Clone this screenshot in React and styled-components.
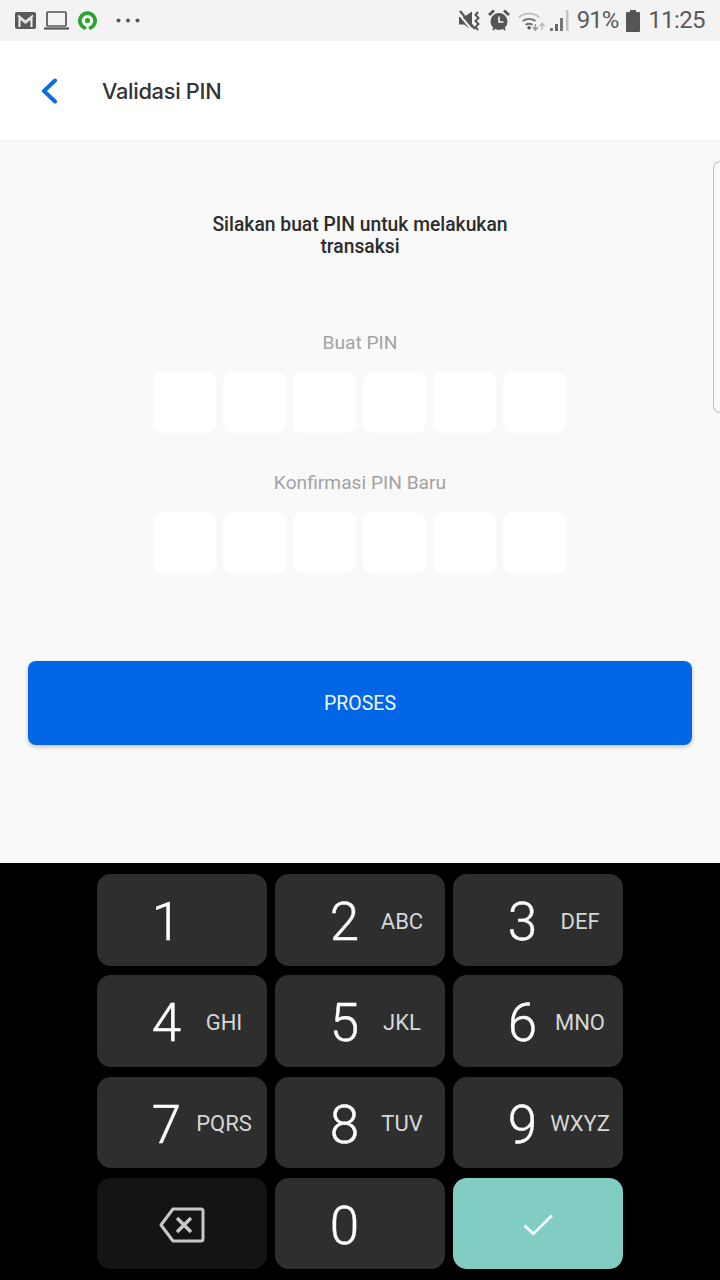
import React from "react";
import styled, { createGlobalStyle } from "styled-components";

const GlobalStyle = createGlobalStyle`
  html, body {
    margin: 0;
    padding: 0;
    background: #000;
  }
  * {
    box-sizing: border-box;
  }
`;

const Screen = styled.div`
  position: relative;
  width: 720px;
  height: 1280px;
  overflow: hidden;
  display: flex;
  flex-direction: column;
  font-family: Roboto, "Liberation Sans", sans-serif;
`;

const StatusBar = styled.div`
  height: 41px;
  background: #f3f3f3;
  display: flex;
  align-items: center;
  justify-content: space-between;
  padding: 0 15px;
  color: #555;
`;

const StatusGroup = styled.div`
  display: flex;
  align-items: center;
`;

const Slot = styled.span`
  display: flex;
  margin-left: ${(p) => p.$left || 0}px;
`;

const StatusText = styled.span`
  font-size: 24px;
  line-height: 41px;
  color: #5a5a5a;
  letter-spacing: ${(p) => p.$spacing}px;
  margin-left: ${(p) => p.$left || 0}px;
`;

const Header = styled.header`
  height: 100px;
  background: #fff;
  border-bottom: 1px solid #f1f1f1;
  display: flex;
  align-items: center;
  padding-left: 40px;
`;

const BackButton = styled.button`
  width: 62px;
  height: 32px;
  padding: 0;
  border: 0;
  background: none;
  display: flex;
  align-items: center;
`;

const Title = styled.h1`
  margin: 0;
  font-family: Inter, sans-serif;
  font-size: 21.8px;
  font-weight: 500;
  letter-spacing: -0.3px;
  color: #333;
`;

const Content = styled.main`
  flex: 1;
  background: #f9f9f9;
  display: flex;
  flex-direction: column;
  align-items: center;
  padding: 73px 28px 0;
`;

const Heading = styled.p`
  margin: 0 0 73px;
  width: 330px;
  font-size: 19.3px;
  line-height: 22px;
  font-weight: 500;
  text-align: center;
  color: #2c2c2c;
`;

const FieldLabel = styled.label`
  font-size: 19.2px;
  line-height: 24px;
  color: #a3a3a3;
  margin-bottom: 17px;
`;

const PinRow = styled.div`
  display: flex;
  gap: 7px;
  padding-right: 1px;
  margin-bottom: ${(p) => p.$bottom}px;
`;

const PinBox = styled.div`
  width: 63px;
  height: 61px;
  border-radius: 9px;
  background: #fff;
`;

const SubmitButton = styled.button`
  width: 100%;
  height: 84px;
  border: 0;
  border-radius: 8px;
  background: #0066e6;
  color: #f2f7ff;
  font-family: inherit;
  font-size: 19.5px;
  box-shadow: 0 2px 4px rgba(0, 0, 0, 0.22);
`;

const EdgeHandle = styled.div`
  position: absolute;
  top: 161px;
  right: 0;
  width: 7px;
  height: 252px;
  border: 1px solid #bdbdbd;
  border-right: 0;
  border-radius: 8px 0 0 8px;
`;

const Keypad = styled.section`
  height: 417px;
  background: #000;
  display: grid;
  grid-template-columns: repeat(3, 170px);
  grid-auto-rows: 91.5px;
  column-gap: 8px;
  row-gap: 9.8px;
  justify-content: start;
  padding: 11px 0 0 97px;
`;

const Key = styled.button`
  border: 0;
  padding: 0 0 0 44px;
  border-radius: 14px;
  background: ${(p) => p.$bg || "#2e2e2e"};
  display: grid;
  grid-template-columns: 51px 64px;
  align-items: center;
  justify-items: center;
  font-family: inherit;
`;

const IconKey = styled(Key)`
  padding: 2px 0 0;
  display: flex;
  justify-content: center;
`;

const Digit = styled.span`
  font-size: 53px;
  line-height: 91px;
  font-weight: 300;
  color: #fff;
  padding-top: 3px;
  -webkit-text-stroke: 0.4px #fff;
`;

const Letters = styled.span`
  font-size: 22px;
  color: #d6d6d6;
  white-space: nowrap;
`;

const keys = [
  ["1", ""],
  ["2", "ABC"],
  ["3", "DEF"],
  ["4", "GHI"],
  ["5", "JKL"],
  ["6", "MNO"],
  ["7", "PQRS"],
  ["8", "TUV"],
  ["9", "WXYZ"],
];

const GmailIcon = () => (
  <svg width="21" height="17" viewBox="0 0 21 17">
    <rect width="21" height="17" rx="2" fill="#595959" />
    <path d="M3.5 15V5l7 5.5 7-5.5v10" fill="#f3f3f3" />
    <path d="M3 3.5l7.5 5.8L18 3.5" fill="none" stroke="#f3f3f3" strokeWidth="1.6" />
    <path d="M5.5 16V8l5 4 5-4v8z" fill="#595959" />
  </svg>
);

const LaptopIcon = () => (
  <svg width="25" height="19" viewBox="0 0 25 19">
    <rect x="3" y="1" width="19" height="14" rx="1" fill="none" stroke="#555" strokeWidth="1.7" />
    <path d="M0 17.5h25" stroke="#555" strokeWidth="2.2" />
  </svg>
);

const RingIcon = () => (
  <svg width="19" height="19" viewBox="0 0 20 20">
    <path
      d="M6.8 17.6a8 8 0 1 1 6.4 0"
      fill="none"
      stroke="#2ba52e"
      strokeWidth="4"
      strokeLinecap="round"
    />
    <circle cx="10" cy="10" r="2.7" fill="#2ba52e" />
  </svg>
);

const DotsIcon = () => (
  <svg width="24" height="5" viewBox="0 0 24 5">
    <circle cx="2.5" cy="2.5" r="2" fill="#555" />
    <circle cx="12" cy="2.5" r="2" fill="#555" />
    <circle cx="21.5" cy="2.5" r="2" fill="#555" />
  </svg>
);

const MuteIcon = () => (
  <svg width="24" height="22" viewBox="0 0 24 22">
    <path d="M1 7h5l8-5.500V20l-8-5.500H1z" fill="#555" />
    <path d="M0 3l15 18" stroke="#f3f3f3" strokeWidth="2" />
    <path d="M2 1l15 18" stroke="#555" strokeWidth="2.200" />
    <path d="M20 2l-2.500 3 3 3-3 3 3 3-3 3 2.500 3" fill="none" stroke="#555" strokeWidth="2" />
  </svg>
);

const AlarmIcon = () => (
  <svg width="22" height="23" viewBox="0 0 22 23">
    <circle cx="11" cy="12.500" r="8.500" fill="#555" />
    <path d="M11 7.500v5.500h4.500" fill="none" stroke="#f3f3f3" strokeWidth="1.700" />
    <path d="M1 6l5-4.500M21 6l-5-4.500" stroke="#555" strokeWidth="3" />
    <path d="M5 21l2-3M17 21l-2-3" stroke="#555" strokeWidth="2" />
  </svg>
);

const WifiIcon = () => (
  <svg width="28" height="22" viewBox="0 0 29 22">
    <path d="M1 7a17 17 0 0 1 21 0" fill="none" stroke="#bdbdbd" strokeWidth="2" />
    <path d="M5 11a11 11 0 0 1 13 0" fill="none" stroke="#6e6e6e" strokeWidth="2" />
    <path d="M8 15a6 6 0 0 1 7 0" fill="none" stroke="#6e6e6e" strokeWidth="2" />
    <circle cx="11.500" cy="18" r="1.800" fill="#555" />
    <path d="M18 14v6m-2.500-2.500L18 20.500l2.500-3" fill="none" stroke="#9a9a9a" strokeWidth="1.500" />
    <path d="M25 20v-6m-2.500 2.500L25 13.500l2.500 3" fill="none" stroke="#bbb" strokeWidth="1.500" />
  </svg>
);

const SignalIcon = () => (
  <svg width="23" height="23" viewBox="0 0 23 23">
    <rect x="2" y="19" width="3" height="3" fill="#777" />
    <rect x="7" y="15" width="3" height="7" fill="#666" />
    <rect x="12" y="9" width="3" height="13" fill="#777" />
    <rect x="18" y="1" width="2.500" height="21" fill="#c4c4c4" />
  </svg>
);

const BatteryIcon = () => (
  <svg width="14" height="22" viewBox="0 0 14 22">
    <path d="M4 0h6v2h3a1 1 0 0 1 1 1v18a1 1 0 0 1-1 1H1a1 1 0 0 1-1-1V3a1 1 0 0 1 1-1h3z" fill="#555" />
  </svg>
);

const BackIcon = () => (
  <svg width="18" height="26" viewBox="0 0 18 26">
    <path
      d="M15 2.500L4 13l11 10.500"
      fill="none"
      stroke="#0d6fdc"
      strokeWidth="4"
      strokeLinecap="round"
      strokeLinejoin="round"
    />
  </svg>
);

const DeleteIcon = () => (
  <svg width="46" height="36" viewBox="0 0 46 36">
    <path
      d="M14 2h28a2 2 0 0 1 2 2v28a2 2 0 0 1-2 2H14L2 18z"
      fill="none"
      stroke="#c8c8c8"
      strokeWidth="3"
      strokeLinejoin="round"
    />
    <path d="M18 11l14 14M32 11L18 25" stroke="#c8c8c8" strokeWidth="3.500" />
  </svg>
);

const CheckIcon = () => (
  <svg width="30" height="23" viewBox="0 0 32 24">
    <path d="M1.500 13L11 22 31 2" fill="none" stroke="#f2fbf9" strokeWidth="3" />
  </svg>
);

const PinInputs = ({ bottom }) => (
  <PinRow $bottom={bottom}>
    {[0, 1, 2, 3, 4, 5].map((i) => (
      <PinBox key={i} />
    ))}
  </PinRow>
);

const App = () => {
  return (
    <>
      <GlobalStyle />
      <Screen>
        <StatusBar>
          <StatusGroup>
            <GmailIcon />
            <Slot $left={8}>
              <LaptopIcon />
            </Slot>
            <Slot $left={9}>
              <RingIcon />
            </Slot>
            <Slot $left={19}>
              <DotsIcon />
            </Slot>
          </StatusGroup>
          <StatusGroup>
            <MuteIcon />
            <Slot $left={6}>
              <AlarmIcon />
            </Slot>
            <Slot $left={8}>
              <WifiIcon />
            </Slot>
            <Slot $left={2}>
              <SignalIcon />
            </Slot>
            <StatusText $left={6} $spacing={-1}>
              91%
            </StatusText>
            <Slot $left={8}>
              <BatteryIcon />
            </Slot>
            <StatusText $left={8} $spacing={-0.6}>
              11:25
            </StatusText>
          </StatusGroup>
        </StatusBar>
        <Header>
          <BackButton>
            <BackIcon />
          </BackButton>
          <Title>Validasi PIN</Title>
        </Header>
        <Content>
          <Heading>Silakan buat PIN untuk melakukan transaksi</Heading>
          <FieldLabel>Buat PIN</FieldLabel>
          <PinInputs bottom={38} />
          <FieldLabel>Konfirmasi PIN Baru</FieldLabel>
          <PinInputs bottom={88} />
          <SubmitButton>PROSES</SubmitButton>
        </Content>
        <EdgeHandle />
        <Keypad>
          {keys.map(([digit, letters]) => (
            <Key key={digit}>
              <Digit>{digit}</Digit>
              <Letters>{letters}</Letters>
            </Key>
          ))}
          <IconKey $bg="#141414">
            <DeleteIcon />
          </IconKey>
          <Key>
            <Digit>0</Digit>
          </Key>
          <IconKey $bg="#81cdc3">
            <CheckIcon />
          </IconKey>
        </Keypad>
      </Screen>
    </>
  );
};

export default App;
